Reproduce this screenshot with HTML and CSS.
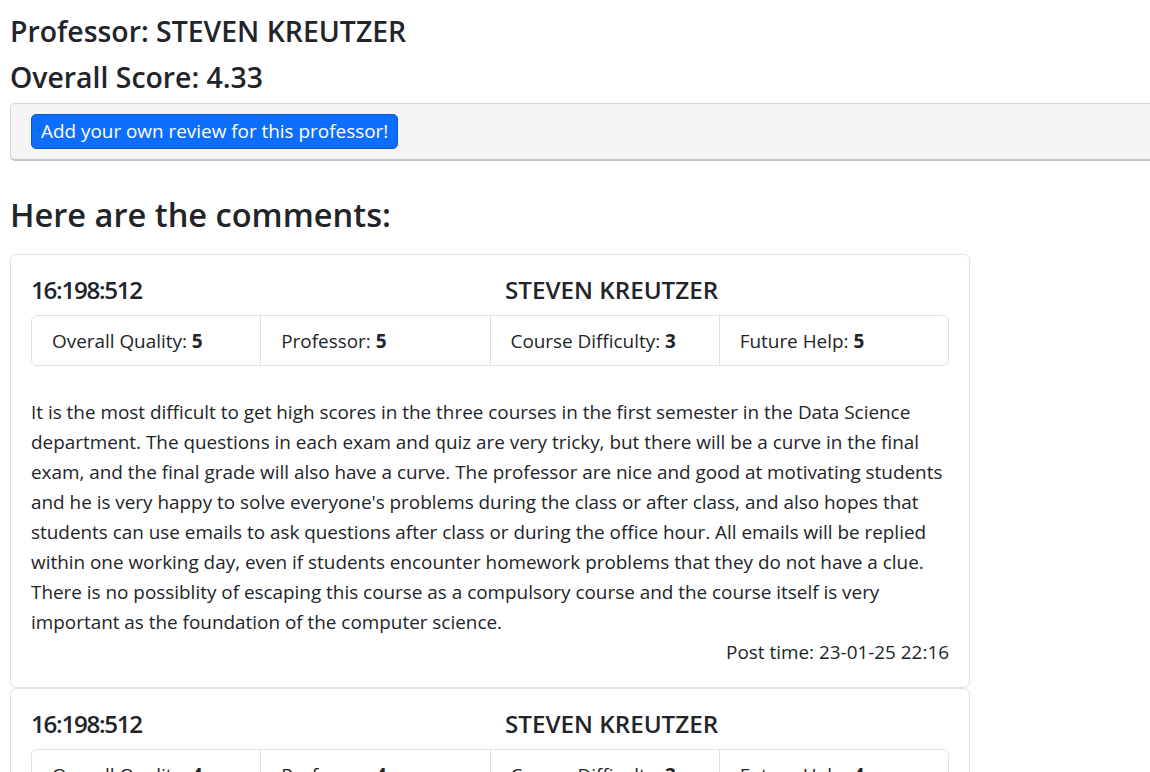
FILE: index.html
```html
<!DOCTYPE html>
<html lang="en">
<head>
<meta charset="utf-8">
<title>Professor: STEVEN KREUTZER</title>
<link rel="stylesheet" href="styles.css">
</head>
<body>
<div class="page">
  <h4 class="prof">Professor: STEVEN KREUTZER</h4>
  <h4 class="score">Overall Score: 4.33</h4>
  <div class="bar">
    <button class="btn-add" type="button">Add your own review for this professor!</button>
  </div>
  <h3 class="comments-title">Here are the comments:</h3>

  <div class="card">
    <div class="card-head">
      <h5 class="card-title course">16:198:512</h5>
      <h5 class="card-title">STEVEN KREUTZER</h5>
    </div>
    <ul class="ratings">
      <li>Overall Quality: <b>5</b></li>
      <li>Professor: <b>5</b></li>
      <li>Course Difficulty: <b>3</b></li>
      <li>Future Help: <b>5</b></li>
    </ul>
    <div class="spacer"></div>
    <p class="comment">It is the most difficult to get high scores in the three courses in the first semester in the Data Science department. The questions in each exam and quiz are very tricky, but there will be a curve in the final exam, and the final grade will also have a curve. The professor are nice and good at motivating students and he is very happy to solve everyone's problems during the class or after class, and also hopes that students can use emails to ask questions after class or during the office hour. All emails will be replied within one working day, even if students encounter homework problems that they do not have a clue. There is no possiblity of escaping this course as a compulsory course and the course itself is very important as the foundation of the computer science.</p>
    <p class="post-time">Post time: 23-01-25 22:16</p>
  </div>

  <div class="card">
    <div class="card-head">
      <h5 class="card-title course">16:198:512</h5>
      <h5 class="card-title">STEVEN KREUTZER</h5>
    </div>
    <ul class="ratings">
      <li>Overall Quality: <b>4</b></li>
      <li>Professor: <b>4</b></li>
      <li>Course Difficulty: <b>3</b></li>
      <li>Future Help: <b>4</b></li>
    </ul>
    <div class="spacer"></div>
    <p class="comment">The professor explains the material clearly and the exams are fair.</p>
    <p class="post-time">Post time: 23-01-24 18:02</p>
  </div>
</div>
</body>
</html>
```
FILE: styles.css
```css
html, body {
  margin: 0;
  padding: 0;
  overflow: hidden;
}
body {
  font-family: "Open Sans", "Noto Sans", sans-serif;
  font-size: 18.9px;
  line-height: 30px;
  color: #212529;
  background: #fff;
}
.page {
  padding: 13px 0 0 10px;
  width: 960px;
}
.prof, .score {
  font-size: 28.4px;
  font-weight: 600;
  line-height: 36px;
  margin: 0 0 10px;
}
.score {
  margin-bottom: 8px;
}
.bar {
  box-sizing: border-box;
  width: 1170px;
  height: 58px;
  padding: 10px 20px;
  background: #f5f5f5;
  border: 1px solid #d4d4d4;
  border-bottom: 2px solid #c6c6c6;
  border-radius: 5px;
}
.btn-add {
  display: block;
  box-sizing: border-box;
  height: 35px;
  padding: 0 9px;
  font-family: inherit;
  font-size: 18.9px;
  line-height: 33px;
  color: #fff;
  background: #0d6efd;
  border: 1px solid #0a58ca;
  border-radius: 5px;
  cursor: pointer;
}
.comments-title {
  font-size: 32.6px;
  font-weight: 600;
  line-height: 42px;
  margin: 33px 0 18px;
}
.card {
  box-sizing: border-box;
  width: 960px;
  padding: 20px;
  border: 1px solid #dee2e6;
  border-radius: 6px;
}
.card-head {
  display: grid;
  grid-template-columns: 1fr 1fr;
  column-gap: 30px;
  margin-bottom: 10px;
}
.card-title {
  font-size: 24.2px;
  font-weight: 600;
  line-height: 30px;
  margin: 0;
}
.card-title.course {
  letter-spacing: -1.3px;
}
.ratings {
  display: flex;
  list-style: none;
  margin: 0;
  padding: 0;
  border: 1px solid #dee2e6;
  border-radius: 6px;
}
.ratings li {
  flex: 1 1 0;
  padding: 10px 20px 9px;
  border-left: 1px solid #dee2e6;
}
.ratings li:first-child {
  border-left: 0;
}
.ratings b {
  font-weight: 700;
}
.spacer {
  height: 31px;
}
.comment {
  margin: 0;
}
.post-time {
  margin: 0;
  text-align: right;
}
```
